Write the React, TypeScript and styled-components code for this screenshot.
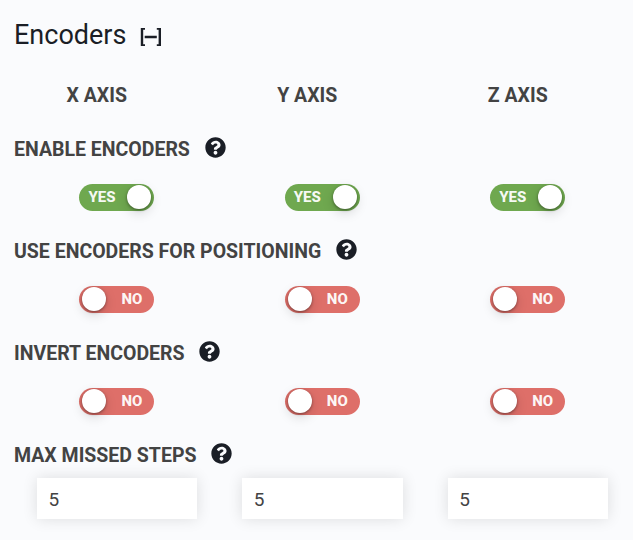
import React from "react";
import styled, { createGlobalStyle } from "styled-components";
import { FaQuestionCircle } from "react-icons/fa";

const GlobalStyle = createGlobalStyle`
  * { box-sizing: border-box; }
  body { margin: 0; background: #fafbfd; font-family: Roboto, sans-serif; color: #434343; }
`;
const Panel = styled.main`
  height: 540px;
  overflow: hidden;
  padding: 15px 14px 0;
`;
const Header = styled.header`
  display: flex;
  align-items: center;
  height: 40px;
  color: #1a1e26;
`;
const Title = styled.h1`
  margin: 0;
  font-size: 27px;
  line-height: 40px;
  font-weight: 400;
`;
const Collapse = styled.button`
  display: flex;
  border: 0;
  padding: 0;
  margin: 4px 0 0 14px;
  background: none;
  color: inherit;
`;
const Columns = styled.div<{ $height: number }>`
  display: grid;
  grid-template-columns: repeat(3, 205.4px);
  height: ${(p) => p.$height}px;
  align-items: start;
`;
const SwitchColumns = styled(Columns)`
  padding: 19px 0 0 0.2px;
`;
const FieldColumns = styled(Columns)`
  padding: 7px 0 0 0.3px;
`;
const AxisRow = styled.div`
  display: grid;
  grid-template-columns: repeat(3, 210.5px);
  margin: 21px 0 0 -22.5px;
  height: 40px;
`;
const Axis = styled.h2`
  margin: 0;
  font-size: 19.5px;
  line-height: 40px;
  font-weight: 700;
  text-align: center;
`;
const LabelRow = styled.div`
  display: flex;
  align-items: center;
  height: 30px;
  margin-top: 19px;
  svg { color: #1a1e26; margin: -5px 0 0 14.8px; }
`;
const Label = styled.span`
  font-size: 19.5px;
  line-height: 30px;
  font-weight: 700;
  white-space: nowrap;
`;
const Cell = styled.div`
  display: flex;
  justify-content: center;
  align-items: center;
`;
const Switch = styled.button<{ $on: boolean }>`
  display: flex;
  flex-direction: ${(p) => (p.$on ? "row" : "row-reverse")};
  align-items: center;
  justify-content: space-between;
  width: 75px;
  height: 27px;
  border: 0;
  border-radius: 14px;
  padding: ${(p) => (p.$on ? "0 3px 1px 9px" : "0 12px 1px 3px")};
  background: ${(p) => (p.$on ? "#6fa84f" : "#de6f69")};
  color: rgba(255, 255, 255, 0.94);
  font: 800 15px/26px Roboto, sans-serif;
`;
const Knob = styled.i`
  width: 24px;
  height: 24px;
  border-radius: 50%;
  background: #fff;
  box-shadow: 0 1px 3px rgba(0, 0, 0, 0.4), 0 4px 12px rgba(0, 0, 0, 0.15);
`;
const Field = styled.input`
  width: 160.4px;
  height: 41px;
  border: 0;
  padding: 1px 11.6px 0;
  background: #fff;
  color: #434343;
  font: 400 19px Roboto, sans-serif;
  box-shadow: 0 0 15px rgba(0, 0, 0, 0.12);
`;
const axes = ["X", "Y", "Z"];
const settings = [
  { label: "ENABLE ENCODERS", on: true },
  { label: "USE ENCODERS FOR POSITIONING", on: false },
  { label: "INVERT ENCODERS", on: false },
];
function SettingLabel({ text }: { text: string }) {
  return <LabelRow><Label>{text}</Label><FaQuestionCircle size={21} /></LabelRow>;
}
export default function App() {
  return (
    <>
      <GlobalStyle />
      <Panel>
        <Header>
          <Title>Encoders</Title>
          <Collapse aria-label="Collapse encoders">
            <svg width="21" height="18" viewBox="0 0 21 18" fill="currentColor">
              <path d="M.8 0H5V1.7H3.2V16.3H5V18H.8ZM21 0H16.8V1.7H18.6V16.3H16.8V18H21ZM4.7 7.8H16.8V10.2H4.7Z" />
            </svg>
          </Collapse>
        </Header>
        <AxisRow>{axes.map((a) => <Axis key={a}>{a} AXIS</Axis>)}</AxisRow>
        {settings.map(({ label, on }) => (
          <React.Fragment key={label}>
            <SettingLabel text={label} />
            <SwitchColumns $height={53}>
              {axes.map((a) => (
                <Cell key={a}><Switch $on={on} aria-label={`${label} ${a}`}>{on ? "YES" : "NO"}<Knob /></Switch></Cell>
              ))}
            </SwitchColumns>
          </React.Fragment>
        ))}
        <SettingLabel text="MAX MISSED STEPS" />
        <FieldColumns $height={56}>
          {axes.map((a) => <Cell key={a}><Field defaultValue="5" aria-label={`Max missed steps ${a}`} /></Cell>)}
        </FieldColumns>
      </Panel>
    </>
  );
}
